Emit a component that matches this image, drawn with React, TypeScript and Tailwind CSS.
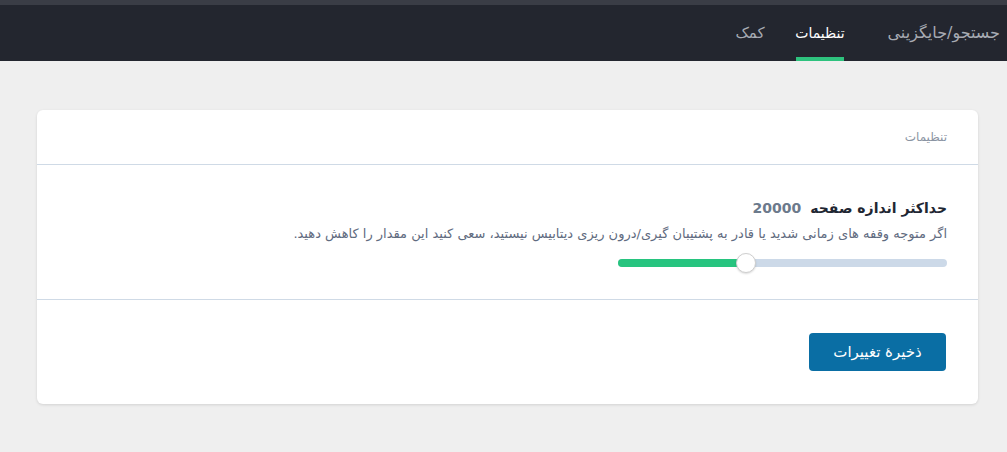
export default function App() {
  return (
    <div
      dir="rtl"
      className="min-h-[452px] w-full bg-[#efefef]"
      style={{ fontFamily: '"DejaVu Sans", "Noto Sans", sans-serif' }}
    >
      <div className="border-t-[5px] border-[#3a3d46] bg-[#23262f]">
        <nav className="flex h-[56px] items-end pr-[7px]">
          <a className="flex h-full w-[123px] items-center justify-start whitespace-nowrap text-[16px] text-[#a7abb3]">
            جستجو/جایگزینی
          </a>
          <a className="relative mr-[33px] flex h-full w-[48px] items-center justify-center whitespace-nowrap text-[14px] text-white">
            تنظیمات
            <span className="absolute bottom-0 left-0 right-0 h-[4px] bg-[#2ec27e]" />
          </a>
          <a className="mr-[31px] flex h-full w-[30px] items-center justify-center whitespace-nowrap text-[15px] text-[#a7abb3]">
            کمک
          </a>
        </nav>
      </div>

      <div className="pb-[46px] pl-[29px] pr-[29px] pt-[49px]">
        <div className="ml-[8px] rounded-[6px] bg-white shadow-[0_1px_3px_rgba(0,0,0,0.12)]">
          <div className="flex h-[55px] items-center border-b border-[#cfdae6] px-[31px]">
            <span className="text-[12px] text-[#8b94a3]">تنظیمات</span>
          </div>

          <div className="border-b border-[#cfdae6] px-[31px] pb-[32px] pt-[32px]">
            <div className="flex h-[22px] items-center gap-[9px]">
              <span className="text-[14px] font-bold text-[#1f2733]">حداکثر اندازه صفحه</span>
              <span className="text-[14px] font-bold text-[#6c7a8c]">20000</span>
            </div>
            <p className="mt-[5px] text-[13px] leading-[20px] text-[#5f6b80]">
              اگر متوجه وقفه های زمانی شدید یا قادر به پشتیبان گیری/درون ریزی دیتابیس نیستید، سعی کنید این مقدار را کاهش دهید.
            </p>
            <div className="mt-[15px] flex">
              <div className="relative h-[8px] w-[329px] rounded-full bg-[#ccd9e8]">
                <div className="absolute bottom-0 left-0 top-0 w-[128px] rounded-full bg-[#27c47f]" />
                <div className="absolute left-[118px] top-[-6px] h-[20px] w-[20px] rounded-full border border-[#cfcfcf] bg-white shadow-[0_1px_2px_rgba(0,0,0,0.15)]" />
              </div>
            </div>
          </div>

          <div className="flex px-[32px] pb-[33px] pt-[33px]">
            <button className="h-[38px] w-[137px] rounded-[4px] bg-[#0a6ea4] text-[15px] text-white">
              ذخیرهٔ تغییرات
            </button>
          </div>
        </div>
      </div>
    </div>
  )
}
